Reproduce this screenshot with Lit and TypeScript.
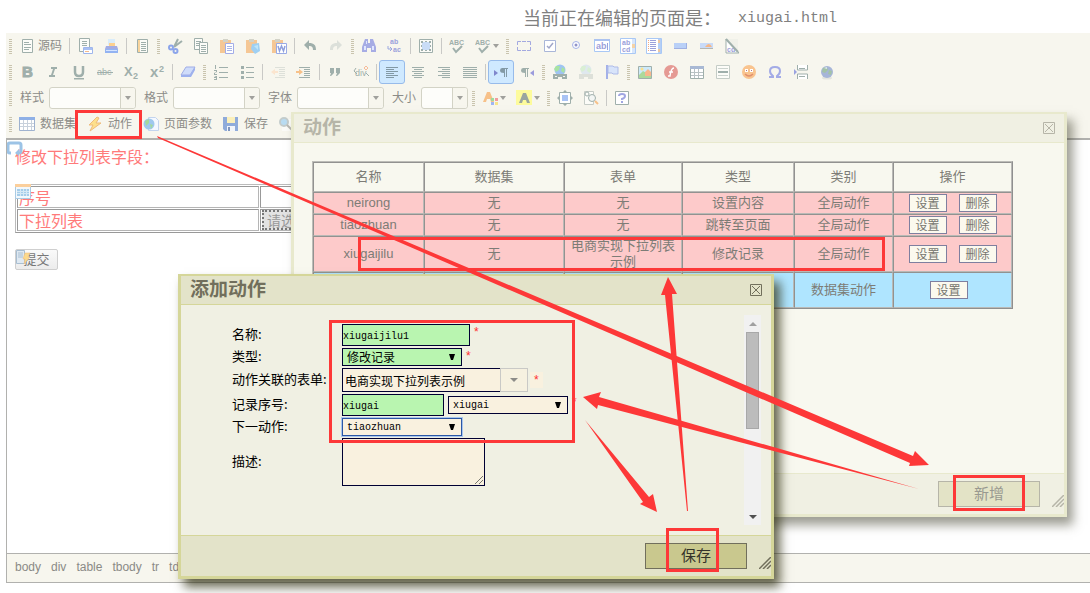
import { LitElement, html, svg, css, nothing, TemplateResult, SVGTemplateResult } from "lit";
import { customElement, property } from "lit/decorators.js";

const INK = "#9fafab";
const BLUE = "#a3a9e0";
const SKY = "#a9c8f5";
const ORANGE = "#f7c189";

const clip = svg`<path d="M1 2h11v13h-11z" fill="#f5c795"/><path d="M4 1h5v3h-5z" fill="#d3d3c8"/>`;
const lines = (x: number, w: number, ys: number[], c = INK) =>
  ys.map((y) => svg`<path d="M${x} ${y}h${w}v1h${-w}z" fill="${c}"/>`);
const glyph = (t: string, size: number, x: number, y: number, fill: string, extra = "") =>
  svg`<text x="${x}" y="${y}" font-size="${size}" fill="${fill}" class="g ${extra}">${t}</text>`;

const ICONS: Record<string, SVGTemplateResult> = {
  source: svg`<path d="M3.5 1.5h10v13h-10z" fill="#fcfcf8" stroke="${INK}"/>${lines(5, 5, [4, 11])}${lines(5, 7, [6, 9])}`,
  preview: svg`<path d="M2.5 .5h10v13h-10z" fill="#fcfcf8" stroke="${INK}"/>${lines(5, 5, [3, 5, 7])}<path d="M6.500 9.500h9v6h-9z" fill="#fff" stroke="#9fb6ec"/><path d="M7 10h8v2h-8z" fill="#a9c0f3"/>${lines(8, 4, [13], "#f5b98a")}`,
  print: svg`<path d="M5 1h7v6h-7z" fill="#d9ecfa"/><path d="M6 5h6v3h-6z" fill="#fdd08e"/><path d="M3 8h11l1 3h-13z" fill="#a3ace3"/><path d="M2 11h13v4h-13z" fill="#93b3f2"/><path d="M3 12h11v1h-11z" fill="#d5e4ff"/>`,
  template: svg`<path d="M3.500 1.500h10v13h-10z" fill="#fcfcf8" stroke="${INK}"/><path d="M4 2h2v12h-2z" fill="#f8d49c"/>${lines(7, 5, [4, 6, 8, 10, 12])}`,
  cut: svg`<path d="M11 1l-4 8M15 3l-8 6" stroke="${INK}" stroke-width="2"/><circle cx="4" cy="9.500" r="2" fill="none" stroke="#8ca5ea" stroke-width="2"/><circle cx="8.500" cy="13" r="2" fill="none" stroke="#8ca5ea" stroke-width="2"/>`,
  copy: svg`<path d="M1.500 .5h8v11h-8z" fill="#fcfcf8" stroke="${INK}"/>${lines(3, 5, [3, 5, 7])}<path d="M6.500 4.500h8v11h-8z" fill="#fcfcf8" stroke="${INK}"/>${lines(8, 5, [7, 9, 11, 13])}`,
  paste: svg`${clip}<path d="M6.500 5.500h8v10h-8z" fill="#fff" stroke="#a3ade8"/>${lines(8, 5, [8, 10, 12], "#a9b5e8")}`,
  pasteText: svg`${clip}<path d="M7 6l7-1 1 8-5 3-4-5z" fill="#9fd0f3"/><path d="M9 8l4-1v5z" fill="#bfe6fa"/>`,
  pasteWord: svg`${clip}<path d="M5.500 5.500h10v10h-10z" fill="#fff" stroke="#9aabe5"/><path d="M7 8l1.500 5 2-5 2 5 1.500-5" fill="none" stroke="#8fa0dd" stroke-width="1.500"/>`,
  undo: svg`<path d="M2 7l5-5v3c5 0 7 2 7 7h-3c0-3-1-4-4-4v4z" fill="${INK}"/>`,
  redo: svg`<path d="M14 7l-5-5v3c-5 0-7 2-7 7h3c0-3 1-4 4-4v4z" fill="#dce0da"/>`,
  find: svg`<path d="M4 1h3v4h2v-4h3l3 8v5h-5v-4h-4v4h-5v-5z" fill="#a6ace4"/><path d="M3 8h2v4h-2zM11 8h2v4h-2zM5 3h1v3h-1z" fill="#dfe6ff"/>`,
  replace: svg`${glyph("ab", 7, 3, 6, "#9ba2dc", "b")}${glyph("ac", 7, 6, 14, "#9ba2dc", "b")}<path d="M1 8v3h3m-1-2l2 2-2 2" fill="none" stroke="#9ba9e0"/>`,
  selectAll: svg`<path d="M1.500 1.500h13v13h-13z" fill="#fcfcf8" stroke="${INK}"/><path d="M4 4h8v8h-8z" fill="#c9dcf6"/><path d="M3 3h2v2h-2zM11 3h2v2h-2zM3 11h2v2h-2zM11 11h2v2h-2zM7 3h2v1h-2zM7 12h2v1h-2zM3 7h1v2h-1zM12 7h1v2h-1z" fill="${INK}"/>`,
  spell: svg`${glyph("ABC", 7, 0, 7, INK, "b")}<path d="M4 10l3 4 6-6" fill="none" stroke="${INK}" stroke-width="2"/>`,
  form: svg`<path d="M5 3.500H1.500V7M1.500 9v3.500H5M11 3.500h3.500V7M14.500 9v3.500H11M6 3.500h4M6 12.500h4" fill="none" stroke="${BLUE}"/>`,
  check: svg`<path d="M2.500 2.500h11v11h-11z" fill="#fff" stroke="#a9b6d8"/><path d="M5 8l2 2 4-5" fill="none" stroke="#a0a6c8" stroke-width="1.500"/>`,
  radio: svg`<circle cx="8" cy="7" r="3.500" fill="#fff" stroke="#a6b3e8"/><circle cx="8" cy="7" r="1.500" fill="#9094c8"/>`,
  textfield: svg`<path d="M.5 1.500h15v12h-15z" fill="#fff" stroke="${SKY}" stroke-width="1"/><path d="M0 1h16v2h-16z" fill="#acc3f0"/>${glyph("ab", 9, 2, 11, "#9ba0da", "b")}<path d="M13 5h1v7h-1z" fill="#9ba0da"/>`,
  textarea: svg`<path d="M.5 .5h15v15h-15z" fill="#fff" stroke="${SKY}"/>${glyph("ab", 7, 2, 7, "#9ba0da", "b")}${glyph("cd", 7, 2, 14, "#9ba0da", "b")}<path d="M12 1h3v14h-3z" fill="#d7e6fb"/><path d="M12 6h3v4h-3z" fill="#f5d3a5"/>`,
  list: svg`<path d="M.5 .5h15v15h-15z" fill="#fff" stroke="${SKY}"/>${lines(4, 6, [2, 4, 6, 8, 10, 12], "#9ba0da")}${lines(2, 1, [2, 4, 6, 8, 10, 12], "#f2a982")}<path d="M12 1h3v14h-3z" fill="#b5cff6"/><path d="M12 2h2v3h-2zM12 11h2v3h-2z" fill="#eec79e"/>`,
  button: svg`<path d="M2 5h13v6h-13z" fill="#b9d0f7"/><path d="M2 10h13v1h-13zM14 5h1v6h-1z" fill="#9fb0e2"/>`,
  imageButton: svg`<path d="M2 5h13v6h-13z" fill="#c9dbf8"/><path d="M2 10h13v1h-13z" fill="#b6b7b0"/><path d="M7 9q4-6 7 0z" fill="#f5b787"/>`,
  hidden: svg`<path d="M2 1v14h13z" fill="#fff" stroke="${INK}"/>${glyph("cd", 7, 3, 14, "#9ba0da", "b")}<path d="M3 1h11v13z" fill="#f0f1e9"/><path d="M2 1l12 13" stroke="${INK}" stroke-width="2"/>`,
  bold: svg`${glyph("B", 15, 3, 13, INK, "b k")}`,
  italic: svg`<path d="M6 3h6v2h-2l-2 6h2v2h-6v-2h2l2-6h-2z" fill="${INK}"/>`,
  underline: svg`<path d="M4 2v6q0 4 4 4t4-4v-6" fill="none" stroke="${INK}" stroke-width="2.500"/><path d="M3 14h10v1.500h-10z" fill="${INK}"/>`,
  strike: svg`${glyph("abc", 9, 0, 11, INK)}<path d="M0 8h16v1h-16z" fill="${INK}"/>`,
  sub: svg`${glyph("X", 13, 1, 12, INK, "b")}${glyph("2", 9, 10, 15, INK, "b")}`,
  sup: svg`${glyph("x", 15, 1, 13, INK, "b")}${glyph("2", 9, 10, 8, INK, "b")}`,
  eraser: svg`<path d="M6 3h9l-5 8h-9z" fill="#cfdcfa" stroke="#a0ade6"/><path d="M1 11h9l5-8v3l-4 7h-10z" fill="#9db1ee"/>`,
  ol: svg`<path d="M2 1h1v4h-1zM1 6h3v2l-2 1v1h2v1h-3v-2l2-1v-1h-2zM1 12h3v4h-3v-1h2v-1h-2v-1h2z" fill="${INK}"/>${lines(6, 9, [3, 8, 13])}`,
  ul: svg`<path d="M2 2h3v3h-3zM2 7h3v3h-3zM2 12h3v3h-3z" fill="${INK}"/>${lines(7, 8, [3, 8, 13])}`,
  outdent: svg`<path d="M5 5l-4 3 4 3v-2h3v-2h-3z" fill="#fbe5cf"/>${lines(5, 10, [3, 13], "#dde0d9")}${lines(9, 6, [5, 7, 9, 11], "#dde0d9")}`,
  indent: svg`<path d="M3 5l4 3-4 3v-2h-3v-2h3z" fill="${ORANGE}"/>${lines(3, 11, [3, 13])}${lines(8, 6, [5, 7, 9, 11])}`,
  quote: svg`<path d="M3 4h4v5l-3 3h-1l1-3h-1zM9 4h4v5l-3 3h-1l1-3h-1z" fill="${INK}"/>`,
  div: svg`<path d="M3 4l-2 3 3 3" fill="none" stroke="${INK}"/>${glyph("div", 9, 2, 12, INK)}<path d="M13 2l2 2-2 2-2-2z" fill="none" stroke="#f6bb98"/><path d="M13 9l3 3" stroke="${INK}"/>`,
  left: svg`${lines(2, 12, [3, 7, 11], "#8299a5")}${lines(2, 8, [5, 9, 13], "#8299a5")}`,
  center: svg`${lines(2, 12, [3, 7, 11])}${lines(4, 8, [5, 9, 13])}`,
  right: svg`${lines(2, 12, [3, 7, 11])}${lines(6, 8, [5, 9, 13])}`,
  justify: svg`${lines(1, 14, [3, 5, 7, 9, 11, 13])}`,
  ltr: svg`<path d="M1 6l4 3-4 3z" fill="#7f86cc"/><path d="M9 4h6v1h-1v8h-1v-8h-1v8h-1v-4q-4 0-4-2.500t2-2.500z" fill="#8299a5"/>`,
  rtl: svg`<path d="M15 6l-4 3 4 3z" fill="#9b9bdc"/><path d="M4 4h6v1h-1v8h-1v-8h-1v8h-1v-4q-4 0-4-2.500t2-2.500z" fill="${INK}"/>`,
  link: svg`<circle cx="8" cy="6" r="5.500" fill="#9fc4f3"/><path d="M4 2l4 0-1 4-3 2-2-3zM10 3l3 2-1 4-3-2z" fill="#a8e3a3"/><path d="M1 10h14v5h-5v-2h-4v2h-5z" fill="${INK}"/><path d="M3 12h2v1h-2zM11 12h2v1h-2z" fill="#f7f6ee"/>`,
  unlink: svg`<circle cx="8" cy="6" r="5.500" fill="#dfe8ee"/><path d="M4 2l4 0-1 4-3 2-2-3zM10 3l3 2-1 4-3-2z" fill="#d9efd4"/><path d="M1 10h14v5h-5v-2h-4v2h-5z" fill="#dde0d9"/>`,
  flag: svg`<path d="M2 1h2v14h-2z" fill="#a3b0e8"/><path d="M4 2h5l1 1h4v7h-5l-1-1h-4z" fill="#d8e4fa" stroke="#aebbe8"/>`,
  image: svg`<path d="M1.500 2.500h13v12h-13z" fill="#cdeafa" stroke="${INK}"/><path d="M2 11l4-4 8 5v2h-12z" fill="#abd99b"/><path d="M8 8l3-3 3 3v4h-6z" fill="#f7b78d"/><circle cx="5" cy="5" r="1.500" fill="#fbe08c"/>`,
  flash: svg`<circle cx="8" cy="8" r="7" fill="#e59a94"/><path d="M11 4q-3 0-4 8h-2M6 8h4" fill="none" stroke="#fff" stroke-width="1.500"/>`,
  table: svg`<path d="M1.500 2.500h13v12h-13z" fill="#fff" stroke="${INK}"/><path d="M1 2h14v3h-14z" fill="#a9b9d4"/><path d="M2 8.500h12M2 11.500h12M5.500 5v9M9.500 5v9" stroke="#b9c2c4"/>`,
  hr: svg`<path d="M1.500 1.500h13v13h-13z" fill="#fcfcf8" stroke="#c4ccc6"/>${lines(3, 10, [4, 11], "#ccd3ce")}<path d="M3 7h10v2h-10z" fill="${INK}"/>`,
  smiley: svg`<circle cx="8" cy="8" r="7" fill="#f9c48f"/><path d="M4 5h3v3h-3zM9 5h3v3h-3z" fill="#fff"/><path d="M5 6h1v1h-1zM10 6h1v1h-1z" fill="#a78"/><path d="M4 10q4 4 8 0" fill="none" stroke="#e1906e" stroke-width="1.500"/>`,
  omega: svg`<path d="M2 13h4v-1q-3-2-3-5 0-4 5-4t5 4q0 3-3 5v1h4" fill="none" stroke="#a3abe6" stroke-width="2"/>`,
  pagebreak: svg`<path d="M1 5l3 3-3 3z" fill="#9ba3e0"/><path d="M4.500 1v5h10v-5M4.500 15v-5h10v5" fill="#fff" stroke="${INK}"/>${lines(6, 6, [4, 12])}`,
  iframe: svg`<ellipse cx="8" cy="14" rx="5" ry="1.500" fill="#e3e4dd"/><circle cx="8" cy="8" r="6" fill="#a6b5d8"/><path d="M4 4l4-1 1 3-3 3-3-1zM10 6l3 1-1 4-3-1z" fill="#a3c3a6"/><path d="M5 4l3-1v2z" fill="#dfe9f2"/>`,
  fore: svg`<path d="M1 12l4-10h3l4 10h-3l-1-3h-3l-1 3z" fill="${ORANGE}"/><path d="M9 8h3v3h-3z" fill="#9fdb9d"/><path d="M13 8h3v3h-3z" fill="#f39c9c"/><path d="M9 12h3v3h-3z" fill="#9fb5f2"/><path d="M13 12h3v3h-3z" fill="#f8e48b"/>`,
  back: svg`<path d="M0 0h16v15h-16z" fill="#fdfb9c"/><path d="M3 13l4-10h3l4 10h-3l-1-3h-3l-1 3z" fill="#9aa69f"/>`,
  maximize: svg`<path d="M2.500 2.500h11v11h-11z" fill="#fff" stroke="${INK}"/><path d="M5 5h6v6h-6z" fill="#a9c3f5"/><path d="M8 0l3 3h-6zM8 16l3-3h-6zM0 8l3-3v6zM16 8l-3-3v6z" fill="${INK}"/>`,
  blocks: svg`<path d="M1.500 1.500h9v13h-9z" fill="#fcfcf8" stroke="#c6ccc7"/><circle cx="4" cy="4" r="2" fill="none" stroke="${INK}"/><circle cx="9" cy="8" r="3.500" fill="#f3f6f4" stroke="${INK}"/><path d="M12 11l3 3" stroke="${ORANGE}" stroke-width="2"/>`,
  about: svg`<path d="M1.500 1.500h13v13h-13z" fill="#fff" stroke="${INK}"/><path d="M5 6q0-2 3-2t3 2q0 2-3 3v1" fill="none" stroke="#a0a6e2" stroke-width="2"/><path d="M7 11h2v2h-2z" fill="#a0a6e2"/>`,
  dataset: svg`<path d="M.5 1.500h15v13h-15z" fill="#fff" stroke="#9fb2cf"/><path d="M0 1h16v3h-16z" fill="#8fb0e6"/><path d="M1 7.500h14M1 10.500h14M4.500 4v10M8.500 4v10M12.500 4v10" stroke="#c8d1dc"/>`,
  bolt: svg`<path d="M10 1l-8 8h4l-3 6 11-8h-5l3-5z" fill="#fde08c" stroke="#eebb7c"/>`,
  globePage: svg`<path d="M5.500 1.500h7l3 3v10h-10z" fill="#f4f8ff" stroke="#c3d4ee"/><circle cx="6" cy="8" r="5.500" fill="#9fc8ee"/><path d="M2 5l4-2v4l-3 3zM7 8l3 1-2 4z" fill="#a4d99b"/>`,
  save: svg`<path d="M0 1h15v14h-13l-2-2z" fill="#8fabda"/><path d="M4 1h8v6h-8z" fill="#fbf0bb"/><path d="M4 10h8v5h-8z" fill="#f2f5fa"/><path d="M5 11h2v4h-2z" fill="#7f95be"/>`,
  search: svg`<path d="M3 3h12v12h-12z" fill="#fbfbf8"/><circle cx="5" cy="6" r="4" fill="#b9dcf2" stroke="#c3cccc" stroke-width="2"/><path d="M8 9l6 6" stroke="#b9b9b4" stroke-width="2"/>`,
};

@customElement("ui-icon")
export class UiIcon extends LitElement {
  static styles = css`
    :host { display: block; width: 16px; height: 16px; flex: none; }
    svg { display: block; }
    .g { font-family: "Liberation Sans", Arial, sans-serif; }
    .b { font-weight: 700; }
    .k { stroke: #9fafab; stroke-width: 1px; }
  `;
  @property() name = "";
  render() {
    return html`<svg width="16" height="16" viewBox="0 0 16 16" aria-hidden="true">${ICONS[this.name] ?? nothing}</svg>`;
  }
}

type Item =
  | { k: "grip" }
  | { k: "sep" }
  | { k: "btn"; icon: string; tip: string; label?: string; on?: boolean; menu?: boolean }
  | { k: "combo"; label: string; small?: boolean };

const G: Item = { k: "grip" };
const S: Item = { k: "sep" };
const b = (icon: string, tip: string, extra: object = {}): Item => ({ k: "btn", icon, tip, ...extra });

const ROWS: Item[][] = [
  [G, b("source", "源码", { label: "源码" }), S, b("preview", "预览"), b("print", "打印"), S, b("template", "模板"),
   G, b("cut", "剪切"), b("copy", "复制"), b("paste", "粘贴"), b("pasteText", "粘贴为文本"), b("pasteWord", "从 Word 粘贴"), S, b("undo", "撤销"), b("redo", "重做"),
   G, b("find", "查找"), b("replace", "替换"), S, b("selectAll", "全选"), S, b("spell", "拼写检查"), b("spell", "即时拼写检查", { menu: true }),
   G, b("form", "表单"), b("check", "复选框"), b("radio", "单选按钮"), b("textfield", "单行文本"), b("textarea", "多行文本"), b("list", "列表"), b("button", "按钮"), b("imageButton", "图像按钮"), b("hidden", "隐藏域")],
  [G, b("bold", "加粗"), b("italic", "倾斜"), b("underline", "下划线"), b("strike", "删除线"), b("sub", "下标"), b("sup", "上标"), S, b("eraser", "清除格式"),
   G, b("ol", "编号列表"), b("ul", "项目列表"), S, b("outdent", "减少缩进"), b("indent", "增加缩进"), S, b("quote", "引用"), b("div", "DIV 容器"), S,
   b("left", "左对齐", { on: true }), b("center", "居中"), b("right", "右对齐"), b("justify", "两端对齐"), S, b("ltr", "从左到右", { on: true }), b("rtl", "从右到左"),
   G, b("link", "超链接"), b("unlink", "取消链接"), b("flag", "锚点"),
   G, b("image", "图像"), b("flash", "Flash"), b("table", "表格"), b("hr", "水平线"), b("smiley", "表情"), b("omega", "特殊符号"), b("pagebreak", "分页符"), b("iframe", "框架")],
  [G, { k: "combo", label: "样式" }, { k: "combo", label: "格式" }, { k: "combo", label: "字体" }, { k: "combo", label: "大小", small: true },
   G, b("fore", "文本颜色", { menu: true }), b("back", "背景颜色", { menu: true }), G, b("maximize", "全屏"), b("blocks", "显示区块"), S, b("about", "关于")],
  [G, b("dataset", "数据集", { label: "数据集" }), b("bolt", "动作", { label: "动作" }), b("globePage", "页面参数", { label: "页面参数" }), b("save", "保存", { label: "保存" }), b("search", "查看")],
];

@customElement("editor-toolbar")
export class EditorToolbar extends LitElement {
  static styles = css`
    :host { display: block; background: #f7f6ee; font: 12px/16px "Liberation Sans", "Noto Sans CJK SC", sans-serif; color: #8c8c88; overflow: hidden; }
    .row { display: flex; align-items: center; height: 26px; padding-left: 1px; }
    .grip { width: 3px; height: 15px; margin: 0 2px; flex: none; background: repeating-linear-gradient(#c9c4ae 0 1px, transparent 1px 2px); }
    .sep { width: 1px; height: 16px; margin: 0 2px; flex: none; background: #c9c9c6; }
    button { display: flex; align-items: center; gap: 3px; box-sizing: border-box; height: 26px; padding: 0 5px; border: 0; background: none; font: inherit; color: inherit; white-space: nowrap; flex: none; }
    .wide button { gap: 5px; padding-right: 6px; }
    .on { height: 24px; padding: 0 4px; border: 1px solid #97bbea; border-radius: 3px; background: #cfe9ff; }
    .menu { gap: 2px; }
    .combo { display: flex; align-items: center; gap: 5px; padding-left: 6px; margin-right: 2px; flex: none; }
    .box { display: grid; width: 87px; height: 22px; }
    .box.small { width: 47px; }
    .box > * { grid-area: 1 / 1; }
    select { appearance: none; box-sizing: border-box; width: 100%; height: 100%; margin: 0; border: 1px solid #d3d3c6; border-radius: 3px; background: #fdfdfa; font: inherit; }
    .arrow { justify-self: end; display: grid; place-items: center; width: 14px; margin: 1px 1px 1px 0; border-left: 1px solid #d3d3c6; background: #f7f6ee; pointer-events: none; border-radius: 0 3px 3px 0; }
  `;
  private caret = html`<svg width="6" height="4" viewBox="0 0 6 4" aria-hidden="true"><path d="M0 0h6l-3 4z" fill="#a0a09c" /></svg>`;

  private item(it: Item, id: string): TemplateResult {
    switch (it.k) {
      case "grip": return html`<span class="grip"></span>`;
      case "sep": return html`<span class="sep"></span>`;
      case "combo":
        return html`<span class="combo"><label for=${id}>${it.label}</label>
          <span class="box ${it.small ? "small" : ""}"><select id=${id}><option></option></select><span class="arrow">${this.caret}</span></span></span>`;
      case "btn":
        return html`<button type="button" title=${it.tip} class="${it.on ? "on" : ""} ${it.menu ? "menu" : ""}">
          <ui-icon name=${it.icon}></ui-icon>${it.label ? html`<span>${it.label}</span>` : nothing}${it.menu ? this.caret : nothing}</button>`;
    }
  }
  render() {
    return ROWS.map((row, r) => html`<div class="row ${r === 3 ? "wide" : ""}">${row.map((it, i) => this.item(it, `c${r}-${i}`))}</div>`);
  }
}

@customElement("app-dialog")
export class AppDialog extends LitElement {
  static styles = css`
    :host {
      --edge: #d5d699; --bar: #e3e3c9; --ink: #716f5c; --face: #c9c88e; --text: #33322a;
      display: flex; flex-direction: column; box-sizing: border-box; border: 3px solid var(--edge); border-top-width: 2px;
      background: #f0f0e3; box-shadow: 6px 8px 10px rgba(50, 50, 20, 0.75);
      font-family: "Liberation Sans", "Noto Sans CJK SC", sans-serif;
    }
    :host([inactive]) {
      --edge: #e8e9cd; --bar: #f0f0e3; --ink: #b6b5a8; --face: #e3e3c6; --text: #999990;
      background: #f8f8ef; box-shadow: 6px 8px 10px rgba(60, 60, 40, 0.5);
    }
    header { display: flex; align-items: center; justify-content: space-between; height: 28px; padding: 0 9px; border-bottom: 1px solid var(--edge); background: var(--bar); }
    h2 { margin: 0; font-size: 19px; line-height: 28px; font-weight: 700; color: var(--ink); }
    .close { display: block; padding: 0; border: 0; background: none; color: var(--ink); }
    svg { display: block; }
    .body { flex: 1; display: flex; }
    ::slotted(*) { flex: 1; }
    footer { display: flex; align-items: flex-start; justify-content: flex-end; height: 40px; border-top: 1px solid var(--edge); background: var(--bar); }
    .ok { box-sizing: border-box; width: 102px; height: 26px; margin-top: 7px; padding: 0 0 3px; border: 1px solid var(--ink); background: var(--face); color: var(--text); font: 15px/20px "Noto Sans CJK SC", sans-serif; }
    .grab { margin: 21px 0 0 12px; color: var(--ink); }
  `;
  @property() heading = "";
  @property() action = "";
  @property({ type: Boolean, reflect: true }) inactive = false;
  render() {
    return html`
      <header><h2>${this.heading}</h2>
        <button class="close" type="button" aria-label="关闭"><svg width="12" height="12" viewBox="0 0 12 12"><path d="M.5 .5h11v11h-11zM2 2l8 8M10 2l-8 8" fill="none" stroke="currentColor" /></svg></button>
      </header>
      <div class="body"><slot></slot></div>
      <footer><button class="ok" type="button">${this.action}</button>
        <svg class="grab" width="12" height="12" viewBox="0 0 12 12" aria-hidden="true"><path d="M0 12L12 0M4 12l8-8M8 12l4-4" stroke="currentColor" stroke-width="1.5" /></svg>
      </footer>`;
  }
}

interface ActionRow { name: string; data: string; form: string; type: string; scope: string; removable: boolean }

const ACTIONS: ActionRow[] = [
  { name: "neirong", data: "无", form: "无", type: "设置内容", scope: "全局动作", removable: true },
  { name: "tiaozhuan", data: "无", form: "无", type: "跳转至页面", scope: "全局动作", removable: true },
  { name: "xiugaijilu", data: "无", form: "电商实现下拉列表示例", type: "修改记录", scope: "全局动作", removable: true },
  { name: "", data: "", form: "", type: "", scope: "数据集动作", removable: false },
];

@customElement("action-table")
export class ActionTable extends LitElement {
  static styles = css`
    :host { display: block; padding: 18px; min-height: 294px; }
    table { table-layout: fixed; width: 701px; border-spacing: 0; border: 1px solid; border-color: #bdbdb8 #8f8f8f #8f8f8f #bdbdb8; font: 13px/16px "Liberation Sans", "Noto Sans CJK SC", sans-serif; color: #7d7c76; }
    th, td { box-sizing: border-box; padding: 0 4px; border: 1px solid; border-color: #929290 #b9b9b6 #b9b9b6 #929290; font-weight: 400; text-align: center; }
    th { height: 30px; }
    td { height: 22px; background: #fdcaca; }
    .tall td { height: 36px; }
    .data td { background: #afe5ff; }
    .c1 { width: 111px; } .c2 { width: 140px; } .c3 { width: 118px; } .c4 { width: 112px; } .c5 { width: 99px; } .c6 { width: 119px; }
    .ops { display: flex; justify-content: center; gap: 12px; }
    .data .ops { padding-right: 8px; }
    button { box-sizing: border-box; width: 38px; height: 18px; padding: 0; border: 1px solid #7f7f9f; background: #fbf9ee; color: #77766f; font: 12px/14px "Noto Sans CJK SC", sans-serif; }
  `;
  render() {
    return html`<table>
      <thead><tr>${["名称", "数据集", "表单", "类型", "类别", "操作"].map((h, i) => html`<th class="c${i + 1}" scope="col">${h}</th>`)}</tr></thead>
      <tbody>${ACTIONS.map((a, i) => html`<tr class="${i > 1 ? "tall" : ""} ${a.removable ? "" : "data"}">
        <td>${a.name}</td><td>${a.data}</td><td>${a.form}</td><td>${a.type}</td><td>${a.scope}</td>
        <td><div class="ops"><button type="button">设置</button>${a.removable ? html`<button type="button">删除</button>` : nothing}</div></td>
      </tr>`)}</tbody>
    </table>`;
  }
}

@customElement("action-form")
export class ActionForm extends LitElement {
  static styles = css`
    :host { display: flex; justify-content: space-between; padding: 10px 10px 10px 51px; font: 13px/16px "Noto Sans CJK SC", sans-serif; color: #000; }
    form { display: grid; grid-template-columns: 110px auto; gap: 2px 0; align-items: center; align-content: start; padding-top: 9px; white-space: nowrap; }
    label { padding-bottom: 2px; }
    .field { display: flex; align-items: center; }
    input, select, textarea { appearance: none; box-sizing: border-box; margin: 0; padding: 0; border: 1px solid #000033; border-radius: 0; background: #f9f1df; color: #000; font: 12px/16px "Noto Sans CJK SC", sans-serif; outline: 0; }
    .latin { padding-top: 2px; font: 10px/14px "Liberation Mono", monospace; }
    input { height: 22px; }
    .name { width: 128px; }
    .serial { width: 102px; margin-right: 4px; }
    .green { background: #b9f5b0; }
    .pick { display: grid; width: 120px; height: 18px; }
    .pick > * { grid-area: 1 / 1; }
    .pick select { padding-left: 4px; }
    .pick svg { place-self: center end; margin-right: 7px; pointer-events: none; }
    .focus { border-color: #2b57a5; box-shadow: 0 0 0 1px #a9c6ee; }
    .related { width: 158px; height: 24px; padding-left: 2px; border-right: 0; }
    .drop { display: grid; place-items: center; box-sizing: border-box; width: 28px; height: 24px; padding: 0; border: 1px solid #c9c9c6; background: #f6f1e0; }
    .star { align-self: flex-start; margin-left: 4px; color: #ff3030; font: 12px/16px "Liberation Sans", sans-serif; }
    .cream { align-self: center; margin-left: 2px; padding: 0 4px; background: #f9f1df; }
    textarea { display: block; width: 143px; height: 48px; resize: none; }
    .note { display: grid; width: 143px; }
    .note > * { grid-area: 1 / 1; }
    .note svg { place-self: end; margin: 0 2px 2px 0; pointer-events: none; }
    .scroll { display: flex; flex-direction: column; align-items: center; width: 17px; height: 210px; background: #f1f1f1; }
    .scroll svg { margin: 7px 0 6px; }
    .thumb { box-sizing: border-box; width: 13px; height: 97px; border: 1px solid #a8a8a8; background: #bcbcbc; }
    .gap { flex: 1; }
  `;
  private tri = html`<svg width="6" height="6" viewBox="0 0 6 6" aria-hidden="true"><path d="M0 0h6l-2 6h-2z" fill="#000" /></svg>`;
  render() {
    return html`
      <form>
        <label for="name">名称:</label>
        <div class="field"><input id="name" class="name green latin" .value=${"xiugaijilu1"} /><span class="star">*</span></div>
        <label for="type">类型:</label>
        <div class="field"><span class="pick"><select id="type" class="green"><option>修改记录</option></select>${this.tri}</span><span class="star">*</span></div>
        <label for="related">动作关联的表单:</label>
        <div class="field"><input id="related" class="related" .value=${"电商实现下拉列表示例"} /><button class="drop" type="button" aria-label="展开"><svg width="8" height="4" viewBox="0 0 8 4"><path d="M0 0h8l-4 4z" fill="#8c8c88" /></svg></button><span class="star cream">*</span></div>
        <label for="serial">记录序号:</label>
        <div class="field"><input id="serial" class="serial green latin" .value=${"xiugai"} /><span class="pick"><select class="latin" aria-label="序号来源"><option>xiugai</option></select>${this.tri}</span><span class="star">*</span></div>
        <label for="next">下一动作:</label>
        <div class="field"><span class="pick"><select id="next" class="latin focus"><option>tiaozhuan</option></select>${this.tri}</span></div>
        <label for="note">描述:</label>
        <div class="note"><textarea id="note"></textarea><svg width="8" height="8" viewBox="0 0 8 8" aria-hidden="true"><path d="M0 8L8 0M4 8l4-4" stroke="#77766f" /></svg></div>
      </form>
      <div class="scroll">
        <svg width="8" height="4" viewBox="0 0 8 4" aria-hidden="true"><path d="M0 4h8l-4-4z" fill="#a0a0a0" /></svg>
        <div class="thumb"></div><div class="gap"></div>
        <svg width="8" height="4" viewBox="0 0 8 4" aria-hidden="true"><path d="M0 0h8l-4 4z" fill="#505050" /></svg>
      </div>`;
  }
}

@customElement("app-root")
export class AppRoot extends LitElement {
  static styles = css`
    :host { display: flex; flex-direction: column; box-sizing: border-box; position: relative; min-height: 100vh; padding: 0 0 10px 6px; overflow: hidden; background: #fff; font-family: "Liberation Sans", "Noto Sans CJK SC", sans-serif; }
    .title { display: flex; justify-content: center; align-items: center; height: 33px; padding: 0 0 0 264px; box-sizing: border-box; margin: 0; font: 18px/26px "Noto Sans CJK SC", sans-serif; color: #808080; }
    .file { margin-left: 17px; padding-top: 4px; font: 15px/26px "Liberation Mono", monospace; }
    .bar { height: 105px; background: #f7f6ee; }
    .editor { flex: 1; display: flex; flex-direction: column; border-top: 2px solid #b1b1ae; border-left: 1px solid #b1b1ae; }
    .canvas { flex: 1; padding: 4px 8px; color: #ff7a7a; font: 16px/24px "Noto Sans CJK SC", sans-serif; }
    .canvas p { margin: 0 0 16px; }
    .marked { position: relative; }
    .mark { position: absolute; }
    .tl { left: -8px; top: -3px; }
    .tb { left: 0; top: 0; }
    table { width: 700px; border-spacing: 1px; table-layout: fixed; border: 1px solid; border-color: #bbb #999 #999 #bbb; }
    td { box-sizing: border-box; height: 22px; padding: 0 1px; border: 1px solid; border-color: #999 #b5b5b5 #b5b5b5 #999; line-height: 20px; }
    .first { width: 242px; }
    .choose { appearance: none; display: block; box-sizing: border-box; height: 20px; width: 120px; padding: 0 3px; border: 2px dotted #777; border-radius: 0; background: #e2e2e2; color: #999; font: 14px/16px "Noto Sans CJK SC", sans-serif; }
    .submit { display: block; box-sizing: border-box; width: 43px; height: 21px; margin-top: 16px; padding: 0 0 2px; border: 1px solid #cfcfcf; border-radius: 2px; background: linear-gradient(#fafafa, #ececec); color: #777; font: 13px/18px "Noto Sans CJK SC", sans-serif; }
    .submit svg { left: -1px; top: -1px; }
    .path { display: flex; align-items: center; gap: 10px; height: 28px; padding-left: 8px; border-top: 1px solid #b1b1ae; border-bottom: 1px solid #b1b1ae; background: #f7f6ee; font-size: 12px; line-height: 16px; }
    .path a { padding-bottom: 3px; color: #8a8a86; text-decoration: none; }
    app-dialog { position: absolute; }
    .list { left: 291px; top: 112px; width: 776px; }
    .add { left: 178px; top: 274px; width: 596px; }
    .notes { position: absolute; left: 0; top: 0; width: 100%; height: 100%; pointer-events: none; }
  `;
  private notes() {
    const boxes = [[75, 110, 67, 29], [358, 237, 527, 34], [329, 320, 246, 123], [666, 528, 53, 44], [953, 475, 72, 36]];
    const arrows = [
      "157,136 158,138 910,463 909,466 929,465 915,451 913,456",
      "919,489 599,397 601,392 583,397 597,409 598,405",
      "585,420 643,502 640,504 657,512 653,494 649,497",
      "688,511 672,294 677,294 668,277 661,295 665,295 687,511",
    ];
    return html`<svg class="notes" aria-hidden="true">
      ${boxes.map(([x, y, w, h]) => svg`<rect x="${x + 1.5}" y="${y + 1.5}" width="${w - 3}" height="${h - 3}" fill="none" stroke="#fd3838" stroke-width="3"/>`)}
      ${arrows.map((p) => svg`<polygon points="${p}" fill="#fd3838"/>`)}
    </svg>`;
  }
  render() {
    return html`
      <h1 class="title">当前正在编辑的页面是：<span class="file">xiugai.html</span></h1>
      <div class="bar"><editor-toolbar></editor-toolbar></div>
      <main class="editor">
        <div class="canvas">
          <p class="marked">修改下拉列表字段：<svg class="mark tl" width="16" height="16" viewBox="0 0 16 16" aria-hidden="true"><path d="M4 12h-1q-2 0-2-2v-6q0-2 2-2h9q2 0 2 2v6q0 2-3 2" fill="none" stroke="#9cc3e6" stroke-width="3" /><path d="M12 8v7l-4-3z" fill="#9cc3e6" /></svg></p>
          <div class="marked">
            <table>
              <tbody>
                <tr><td class="first">序号</td><td></td></tr>
                <tr><td>下拉列表</td><td><select class="choose" aria-label="下拉列表"><option>请选择</option></select></td></tr>
              </tbody>
            </table>
            <svg class="mark tb" width="16" height="15" viewBox="0 0 16 15" aria-hidden="true"><path d="M.5 .5h15v14h-15z" fill="#f3f8fc" stroke="#a9cbe4" /><path d="M0 0h16v3h-16z" fill="#fbcf9c" /><path d="M2 5h12v7h-12z" fill="#a5cdea" /><path d="M2 7.500h12M2 9.500h12M5.500 5v7M8.500 5v7M11.500 5v7" stroke="#d6e9f5" /></svg>
          </div>
          <button class="submit marked" type="button">提交<svg class="mark" width="16" height="16" viewBox="0 0 16 16" aria-hidden="true"><path d="M1.500 1.500h8v13h-8z" fill="#dfe9f2" stroke="#a9bfd2" /><path d="M3 4h5M3 6h5M3 8h5" stroke="#a9bfd2" /><path d="M10 4l5 0-2 4h2l-6 7 1-5h-2z" fill="#fbd98c" stroke="#f0bb78" stroke-width=".5" /></svg></button>
        </div>
        <nav class="path">${["body", "div", "table", "tbody", "tr", "td"].map((t) => html`<a href="#${t}">${t}</a>`)}</nav>
      </main>
      <app-dialog class="list" heading="动作" action="新增" inactive><action-table></action-table></app-dialog>
      <app-dialog class="add" heading="添加动作" action="保存"><action-form></action-form></app-dialog>
      ${this.notes()}`;
  }
}
